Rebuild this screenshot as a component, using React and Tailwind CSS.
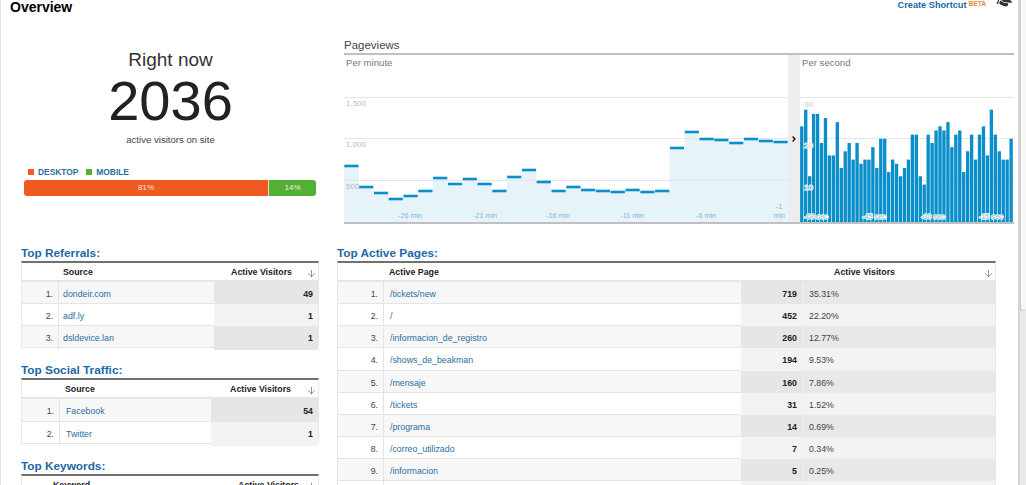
import React from 'react';
import { ArrowDown, ChevronRight } from 'lucide-react';
import { FaGraduationCap } from 'react-icons/fa';

const stepsY = [166, 187, 193, 199, 196, 191, 178, 184, 179, 184, 191, 177, 170, 182, 191, 187, 190, 191, 192, 190, 192, 191, 148, 132, 139, 140, 143, 139, 141, 142];
const bars = [23, 27, 11, 26, 26, 19, 25, 16, 16, 24, 13, 17, 19, 15, 19, 14, 15, 15, 18, 13, 20, 20, 12, 15, 14, 11, 13, 15, 21, 21, 11, 9, 21, 19, 22, 23, 22, 24, 18, 21, 22, 12, 17, 21, 15, 21, 23, 16, 27, 21, 17, 15, 15, 20];

const referrals = [
  { n: '1.', name: 'dondeir.com', v: 49 },
  { n: '2.', name: 'adf.ly', v: 1 },
  { n: '3.', name: 'dsldevice.lan', v: 1 },
];
const social = [
  { n: '1.', name: 'Facebook', v: 54 },
  { n: '2.', name: 'Twitter', v: 1 },
];
const pages = [
  { n: '1.', name: '/tickets/new', v: 719, p: '35.31%' },
  { n: '2.', name: '/', v: 452, p: '22.20%' },
  { n: '3.', name: '/informacion_de_registro', v: 260, p: '12.77%' },
  { n: '4.', name: '/shows_de_beakman', v: 194, p: '9.53%' },
  { n: '5.', name: '/mensaje', v: 160, p: '7.86%' },
  { n: '6.', name: '/tickets', v: 31, p: '1.52%' },
  { n: '7.', name: '/programa', v: 14, p: '0.69%' },
  { n: '8.', name: '/correo_utilizado', v: 7, p: '0.34%' },
  { n: '9.', name: '/informacion', v: 5, p: '0.25%' },
  // next row is cut off by the window
  { n: '', name: '', v: '', p: '' },
];

function PerMinute() {
  const w = 14.8;
  const bottom = 167;
  const area = stepsY.map((y, i) => `L${i * w} ${y - 55} L${(i + 1) * w} ${y - 55}`).join(' ');
  return (
    <svg width="444" height="167" className="block shrink-0 font-['Liberation_Sans',sans-serif]">
      <path d={`M0 ${bottom} ${area} L444 ${bottom} Z`} fill="#e6f3f9" />
      {[42, 83, 125].map((y) => <rect key={y} x="0" y={y} width="444" height="1" fill="#e6e6e6" />)}
      {stepsY.map((y, i) => <rect key={i} x={i * w + 0.3} y={y - 56.3} width={w - 0.6} height="2.6" fill="#0a8fca" />)}
      <text x="2" y="11" fontSize="9.6" fill="#777">Per minute</text>
      <text x="2" y="51" fontSize="8" fill="#bbb">1,500</text>
      <text x="2" y="92" fontSize="8" fill="#bbb">1,000</text>
      <text x="2" y="134" fontSize="8" fill="#bbb">500</text>
      {[['-26 min', 66], ['-21 min', 141], ['-16 min', 214], ['-11 min', 288], ['-6 min', 362]].map(([t, x]) => (
        <text key={t} x={x} y="163" fontSize="7.2" fill="#7db8d4" textAnchor="middle">{t}</text>
      ))}
      <text x="435" y="154" fontSize="7.2" fill="#7db8d4" textAnchor="middle">-1</text>
      <text x="435" y="163" fontSize="7.2" fill="#7db8d4" textAnchor="middle">min</text>
    </svg>
  );
}

function PerSecond() {
  const pitch = 3.95;
  return (
    <svg width="214" height="167" className="block shrink-0 font-['Liberation_Sans',sans-serif]">
      {[42, 83, 125].map((y) => <rect key={y} x="0" y={y} width="214" height="1" fill="#e6e6e6" />)}
      {bars.map((v, i) => {
        const h = v * 4.16;
        return <rect key={i} x={i * pitch + 0.1} y={167 - h} width={pitch - 0.6} height={h} fill="#0a8fca" />;
      })}
      <text x="2" y="11" fontSize="9.6" fill="#777">Per second</text>
      <text x="4" y="52" fontSize="8" fill="#ccc">30</text>
      <text x="4" y="93" fontSize="8" fill="#ccc" stroke="#fff" strokeWidth="1" paintOrder="stroke">20</text>
      <text x="4" y="135" fontSize="8" fill="#ccc" stroke="#fff" strokeWidth="1" paintOrder="stroke">10</text>
      {[['-60 sec', 16], ['-45 sec', 74], ['-30 sec', 133], ['-15 sec', 191]].map(([t, x]) => (
        <text key={t} x={x} y="164" fontSize="7.2" fill="#7db8d4" stroke="#fff" strokeWidth="1.6" paintOrder="stroke" textAnchor="middle">{t}</text>
      ))}
    </svg>
  );
}

function HeadRow({ cols, name, nameCls, avCls }) {
  return (
    <div className={`grid h-[19px] items-center border-b-2 border-[#e6e6e6] pt-[2px] text-[8.8px] font-bold text-[#222] ${cols}`}>
      <div />
      <div className={nameCls}>{name}</div>
      <div className={`relative col-span-full col-start-3 flex h-full items-center ${avCls}`}>
        Active Visitors
        <ArrowDown size={11} strokeWidth={1.5} className="absolute right-[1px] top-[3px] text-[#666]" />
      </div>
    </div>
  );
}

function Table({ title, titleCls, cols, name, nameCls, rowCls, avCls, rows, withPct }) {
  return (
    <section className={titleCls}>
      <h3 className="h-[14px] text-[11.8px] font-bold leading-[13px] text-[#1c69a4]">{title}</h3>
      <div className="border-t-2 border-[#707070] border-x border-x-[#e8e8e8]">
        <HeadRow cols={cols} name={name} nameCls={nameCls} avCls={avCls} />
        {rows.map((r, i) => (
          <div key={i} className={`grid h-[22.15px] border-b border-[#e4e4e4] text-[8.8px] leading-[24px] ${cols} ${i % 2 ? 'bg-white' : 'bg-[#f7f7f7]'}`}>
            <div className="border-r border-[#e4e4e4] pr-[5px] text-right text-[#444]">{r.n}</div>
            <div className={`truncate text-[#2a6d9f] ${rowCls}`}>{r.name}</div>
            <div className={`pr-[5px] text-right font-bold text-[#222] ${i % 2 ? 'bg-[#f3f3f3]' : 'bg-[#e6e6e6]'}`}>{r.v}</div>
            {withPct && (
              <div className={`border-l border-[#f0f0f0] pl-[6px] text-[#444] ${i % 2 ? 'bg-[#f3f3f3]' : 'bg-[#e8e8e8]'}`}>{r.p}</div>
            )}
          </div>
        ))}
      </div>
    </section>
  );
}

export default function App() {
  return (
    <div className="flex h-[485px] w-[1026px] overflow-hidden bg-white font-['Liberation_Sans',Arial,sans-serif]">
      <main className="w-[1018px] shrink-0 border-l border-[#e4e4e4]">
        {/* Title bar */}
        <header className="flex h-[32px] items-start pl-[9px]">
          <h1 className="text-[14px] font-bold leading-[14px] text-black">Overview</h1>
          <div className="ml-auto flex items-start pr-[6px]">
            <a href="#" className="text-[9.2px] font-bold leading-[10px] text-[#1c69a4]">Create Shortcut</a>
            <span className="ml-[2px] text-[6.6px] font-bold leading-[7px] text-[#e58a3c]">BETA</span>
            <FaGraduationCap size={15} className="ml-[11px] -mt-[6px] rotate-[20deg] text-[#333]" />
          </div>
        </header>

        <div className="flex h-[215px]">
          {/* Right now */}
          <div className="w-[343px] shrink-0">
            <div className="w-[339px] pt-[17px] text-center">
              <div className="text-[19px] leading-[22px] text-[#333]">Right now</div>
              <div className="text-[56px] leading-[60px] text-[#222]">2036</div>
              <div className="mt-[3px] text-[9.6px] leading-[12px] text-[#444]">active visitors on site</div>
            </div>
            <div className="mt-[22px] ml-[27px] flex h-[8px] items-center text-[8.4px] font-bold text-[#2a6d9f]">
              <span className="mr-[4px] size-[6px] bg-[#f15a22]" />DESKTOP
              <span className="ml-[8px] mr-[4px] size-[6px] bg-[#52b034]" />MOBILE
            </div>
            <div className="ml-[23px] mt-[4px] flex h-[16px] w-[292px] overflow-hidden rounded-[3px] text-center text-[8px] leading-[16px] text-[#f7e8e0]">
              <div className="w-[244px] bg-[#f0591f]">81%</div>
              <div className="flex-1 border-l border-[#f0e0c0] bg-[#52b034]">14%</div>
            </div>
          </div>

          {/* Pageviews chart */}
          <div className="w-[670px] shrink-0">
            <h2 className="h-[21px] pt-[6px] text-[11.5px] leading-[14px] text-[#444]">Pageviews</h2>
            <div className="flex h-[171px] border-y-2 border-[#c0c0c0]">
              <PerMinute />
              <div className="flex w-[12px] shrink-0 items-center justify-center bg-[#ededed]">
                <ChevronRight size={8} strokeWidth={4} className="text-black" />
              </div>
              <PerSecond />
            </div>
          </div>
        </div>

        {/* Tables */}
        <div className="flex">
          <div className="ml-[20px] w-[298px] shrink-0">
            <Table title="Top Referrals:" cols="grid-cols-[37px_155px_1fr]" name="Source" nameCls="pl-[4px]" rowCls="pl-[4px]" avCls="justify-end pr-[26px]" rows={referrals} />
            <Table title="Top Social Traffic:" titleCls="mt-[16px]" cols="grid-cols-[38px_151px_1fr]" name="Source" nameCls="pl-[5px]" rowCls="pl-[6px]" avCls="justify-end pr-[27px]" rows={social} />
            <Table title="Top Keywords:" titleCls="mt-[16px]" cols="grid-cols-[30px_100px_1fr]" name="Keyword" nameCls="pl-[1px]" rowCls="" avCls="justify-end pr-[19px]" rows={[]} />
          </div>
          <div className="ml-[18px] w-[659px] shrink-0">
            <Table title="Top Active Pages:" cols="grid-cols-[46px_357px_61px_1fr]" name="Active Page" nameCls="pl-[5px]" rowCls="pl-[6px]" avCls="justify-end pr-[100px]" rows={pages} withPct />
          </div>
        </div>
      </main>

      {/* Scrollbar */}
      <div className="flex-1 border-l-2 border-[#d4d4d4] bg-[#e9e9e9]">
        <div className="h-[311px] rounded-b-[3px] border-b border-l border-[#ccc] bg-[#f7f7f7]" />
      </div>
    </div>
  );
}
